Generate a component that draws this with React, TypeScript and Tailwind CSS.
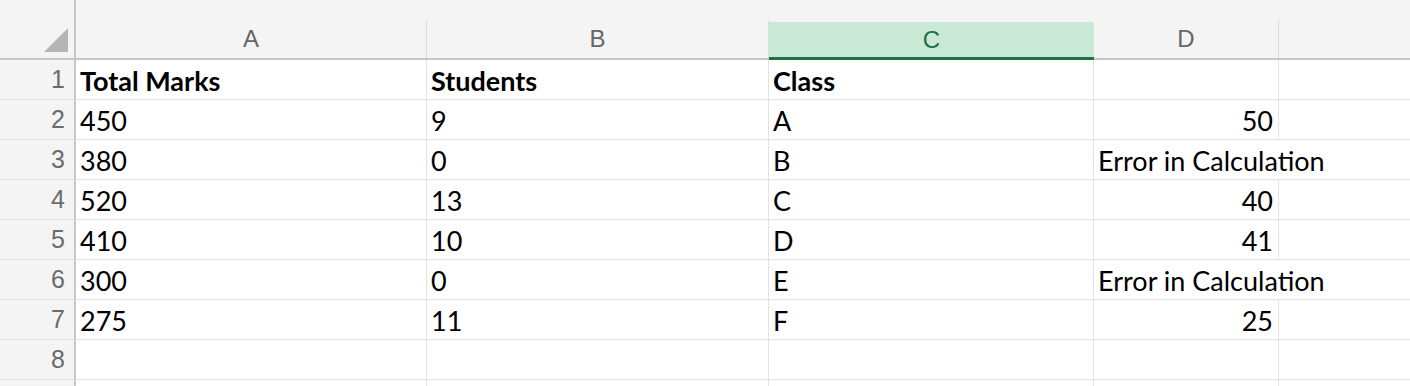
const cols = [
  { key: 'A', w: 'w-[351px]' },
  { key: 'B', w: 'w-[342px]' },
  { key: 'C', w: 'w-[325px]' },
  { key: 'D', w: 'w-[185px]' },
];

type Cell = { text: string; align?: 'left' | 'right'; bold?: boolean; spill?: boolean };

const rows: Cell[][] = [
  [
    { text: 'Total Marks', bold: true },
    { text: 'Students', bold: true },
    { text: 'Class', bold: true },
    { text: '' },
  ],
  [{ text: '450' }, { text: '9' }, { text: 'A' }, { text: '50', align: 'right' }],
  [{ text: '380' }, { text: '0' }, { text: 'B' }, { text: 'Error in Calculation', spill: true }],
  [{ text: '520' }, { text: '13' }, { text: 'C' }, { text: '40', align: 'right' }],
  [{ text: '410' }, { text: '10' }, { text: 'D' }, { text: '41', align: 'right' }],
  [{ text: '300' }, { text: '0' }, { text: 'E' }, { text: 'Error in Calculation', spill: true }],
  [{ text: '275' }, { text: '11' }, { text: 'F' }, { text: '25', align: 'right' }],
  [{ text: '' }, { text: '' }, { text: '' }, { text: '' }],
  [{ text: '' }, { text: '' }, { text: '' }, { text: '' }],
];

const cellFont = "font-['Lato','Open_Sans',sans-serif]";

export default function App() {
  return (
    <div className="w-[1410px] h-[386px] overflow-hidden bg-white">
      {/* Column headers */}
      <div className="flex h-[60px] bg-[#f4f4f4] border-b-2 border-[#c6c6c6] font-['Liberation_Sans',sans-serif] text-[24px] text-[#666666]">
        <div className="relative w-[76px] shrink-0 border-r-2 border-[#c6c6c6]">
          <svg className="absolute left-[44px] top-[28px]" width="24" height="24" viewBox="0 0 24 24">
            <polygon points="24,0 24,24 0,24" fill="#b5b5b5" />
          </svg>
        </div>
        {cols.map((c) => (
          <div key={c.key} className={`${c.w} shrink-0 flex items-end`}>
            {c.key === 'C' ? (
              <div className="w-full h-[38px] bg-[#c9e9d6] border-b-[3px] border-[#1e7145] text-[#1e7145] flex items-center justify-center -mb-[2px] pt-[1px]">
                C
              </div>
            ) : (
              <div className="w-full h-[38px] border-r border-[#dcdcdc] flex items-center justify-center">
                {c.key}
              </div>
            )}
          </div>
        ))}
        <div className="flex-1" />
      </div>

      {/* Data rows */}
      {rows.map((row, i) => (
        <div key={i} className="flex h-[40px] border-b border-[#e2e2e2]">
          <div className="w-[76px] shrink-0 bg-[#f4f4f4] border-r-2 border-[#c6c6c6] flex items-center justify-end pr-[9px] font-['Liberation_Sans',sans-serif] text-[25px] text-[#6b6b6b]">
            {i < 8 ? i + 1 : ''}
          </div>
          {row.map((cell, j) => (
            <div
              key={j}
              className={`${cols[j].w} shrink-0 flex items-center pt-[1px] ${
                cell.spill ? 'relative z-10' : 'border-r border-[#e2e2e2]'
              } ${cell.align === 'right' ? 'justify-end pr-[5px]' : 'pl-[4px]'}`}
            >
              <span
                className={`${cellFont} text-[27px] leading-none text-black whitespace-nowrap ${
                  cell.bold ? 'font-bold' : ''
                } ${cell.spill ? 'bg-white pr-[2px]' : ''}`}
              >
                {cell.text}
              </span>
            </div>
          ))}
          <div className="flex-1" />
        </div>
      ))}
    </div>
  );
}
